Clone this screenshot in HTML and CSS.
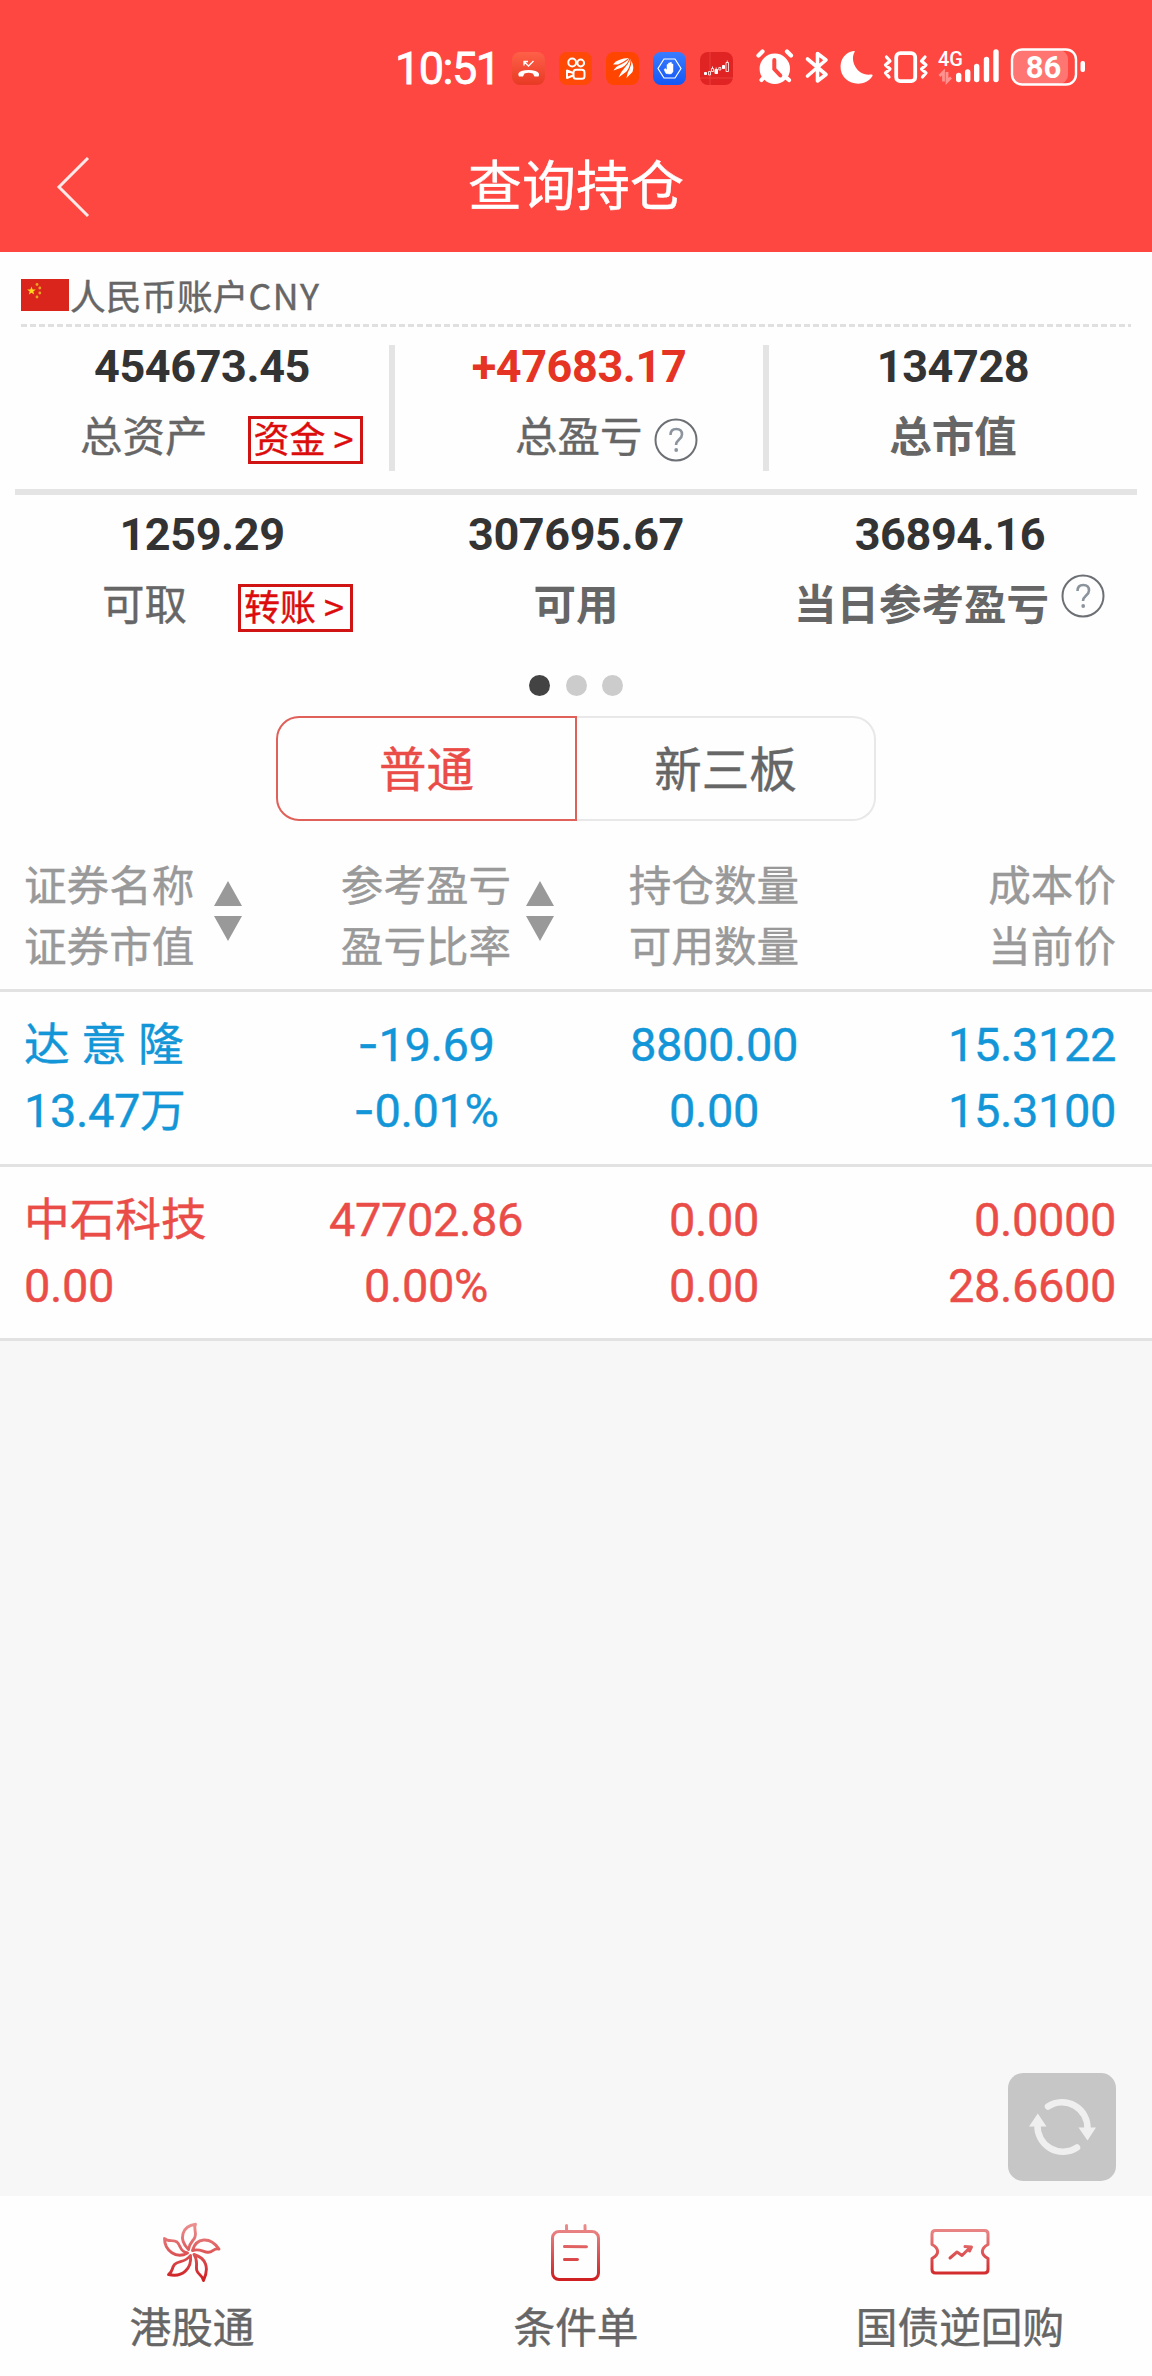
FILE: index.html
```html
<!DOCTYPE html>
<html lang="zh-CN">
<head>
<meta charset="utf-8">
<title>查询持仓</title>
<link rel="stylesheet" href="styles.css">
</head>
<body>
<div class="app">
  <header class="header">
    <div class="status">
      <span class="time">10:51</span>
      <div class="apps">
        <svg class="app-icon" viewBox="0 0 33 33"><defs><linearGradient id="gCall" x1="0" y1="0" x2="0" y2="1"><stop offset="0" stop-color="#ff6048"/><stop offset="1" stop-color="#e83a25"/></linearGradient></defs><rect width="33" height="33" rx="8" fill="url(#gCall)"/><path d="M7 24.500Q4.800 20.800 9.500 19.100Q16.500 17 23.500 19.100Q28.500 20.800 26.500 24.500L22.500 24.500 20.800 21.500Q16.500 20 12.500 21.500L11 24.500Z" fill="#fff"/><path d="M12 13.500V9.500H16M12 9.500l4.500 4.500 5-5" fill="none" stroke="#fff" stroke-width="1.300"/></svg>
        <svg class="app-icon" viewBox="0 0 33 33"><rect width="33" height="33" rx="8" fill="#ff4906"/><g fill="none" stroke="#fff" stroke-width="2"><circle cx="13.200" cy="10.500" r="3.900"/><circle cx="21.700" cy="11" r="3.400"/><rect x="14.500" y="17.800" width="11" height="9" rx="2.600"/><path d="M14 21l-6-2.500v7.500l6-2.500" stroke-linejoin="round"/></g></svg>
        <svg class="app-icon" viewBox="0 0 33 33"><rect width="33" height="33" rx="8" fill="#ff4500"/><path d="M7 12.500Q11 6.500 23 6 17 10.500 12 12.500ZM7.500 18.500Q10 14 15 12.500 20 10 23.500 6.500 21 13 16 15.500ZM12.500 25.500Q15 19.500 18.500 16 22.500 11.500 24.500 7 24.500 14.500 20.500 19.500ZM20.500 26Q21 21 23.500 17 25.500 12 25.500 9 28.500 15 26.500 20Z" fill="#fff"/></svg>
        <svg class="app-icon" viewBox="0 0 33 33"><defs><linearGradient id="gBlue" x1="0" y1="0" x2="0" y2="1"><stop offset="0" stop-color="#3a7cff"/><stop offset="1" stop-color="#1257f5"/></linearGradient></defs><rect width="33" height="33" rx="8" fill="url(#gBlue)"/><path d="M11 7h11l6 9.500-6 9.500H11L5 16.500Z" fill="none" stroke="#fff" stroke-width="1.200"/><path d="M13 21.500l-2-4 1.500-1 1.500 1.500V12.500h1.500V16v-5H17v5-5.500h1.500V16v-4H20v7.500q-1 2.500-3 2.500Z" fill="#fff" stroke="#fff" stroke-width=".5"/></svg>
        <svg class="app-icon" viewBox="0 0 33 33"><rect width="33" height="33" rx="8" fill="#e02424"/><path d="M10 0v33M0 26h33" stroke="#ee4747" stroke-width=".7"/><path d="M4.500 20.500h2v2h-2zM15 17.500h2.500v4H15zM22.500 13.500h2v3h-2z" fill="#fff" stroke="#fff"/><path d="M8.500 19.500h2v3.500h-2zM11.500 16.500h2v3h-2zM18.800 15.500h2v2.500h-2zM26 10.500h2.500v9H26zM12.500 14.500v2M27.300 8.500v2M16.200 15.500v2" fill="none" stroke="#fff" stroke-width=".8"/></svg>
      </div>
      <svg class="signals" viewBox="0 0 332 40" role="img" aria-label="系统状态">
        <g fill="#fff">
          <circle cx="18.800" cy="20.700" r="15.200"/>
          <path d="M8.500 28.500L5.500 32M29 28.500l4 3.500M2.500 7.500L6.500 3.500M31 3.500L35 7.500" stroke="#fff" stroke-width="4.200" stroke-linecap="round"/>
          <path d="M18.300 12v9l6 6.500" fill="none" stroke="#ff4741" stroke-width="4" stroke-linecap="round"/>
          <path d="M51.500 11l18.500 15.500-8.500 6.500V5.500L70 12 51.500 28" fill="none" stroke="#fff" stroke-width="3.600" stroke-linecap="round" stroke-linejoin="round"/>
          <path d="M99 3.200C93 12 101 28.500 115 26.500c2-.5 1.800.8 1.200 2C107 41.500 84 36 84.500 18 85 8.500 92 3.500 97.500 3Z"/>
          <rect x="140.200" y="5.200" width="19" height="28" rx="4" fill="none" stroke="#fff" stroke-width="3.800"/>
          <path d="M130.500 9l3.500 4-4.500 4 4.500 4-4.500 4 3.500 4M169 9l-3.500 4 4.500 4-4.500 4 4.500 4-3.500 4" fill="none" stroke="#fff" stroke-width="3.200" stroke-linecap="round" stroke-linejoin="round"/>
        </g>
        <text class="net" x="182" y="18" textLength="25" lengthAdjust="spacingAndGlyphs">4G</text>
        <path d="M187.500 33.500V24l-4 4M191 24v9.500l4-4" fill="none" stroke="#ff928e" stroke-width="2.800"/>
        <path d="M202.700 27.500v4M211.700 24v7.500M220.700 18.500v13M230.500 11.500v20M240 4v27.500" stroke="#fff" stroke-width="5.400" stroke-linecap="round"/>
        <rect x="256" y="2" width="56" height="34" rx="9" fill="#ff7571"/>
        <rect x="256" y="1.500" width="64" height="35" rx="10" fill="none" stroke="#fff" stroke-width="2.400"/>
        <rect x="324.500" y="13" width="4.500" height="11" rx="2" fill="#fff"/>
        <text class="level" x="287.500" y="30" text-anchor="middle">86</text>
      </svg>
    </div>
    <div class="titlebar">
      <svg class="back" viewBox="0 0 34 62"><path d="M32 2L3 31l29 29" fill="none" stroke="#ffe9e8" stroke-width="3"/></svg>
      <h1 class="title">查询持仓</h1>
    </div>
  </header>

  <section class="summary">
    <div class="account">
      <svg class="flag" viewBox="0 0 48 32"><rect width="48" height="32" fill="#da251c"/><path d="M10.500 7.500l1.100 3h3.200l-2.500 2 .9 3.100-2.700-1.800-2.700 1.800.9-3.100-2.500-2h3.200Z" fill="#ffd91a"/><g fill="#e9a51f"><circle cx="16" cy="5.500" r="1.400"/><circle cx="18.800" cy="9" r="1.400"/><circle cx="18.800" cy="14" r="1.400"/><circle cx="16" cy="18" r="1.400"/></g></svg>
      <span>人民币账户<span class="code">CNY</span></span>
    </div>
    <div class="dashes"></div>
    <div class="stats stats-top">
      <div class="stat"><b class="num">454673.45</b><div class="label label-assets">总资产<a class="tag">资金 &gt;</a></div></div>
      <i class="vline"></i>
      <div class="stat"><b class="num up">+47683.17</b><div class="label label-profit">总盈亏<svg class="help" viewBox="0 0 44 44"><circle cx="22" cy="22" r="20.500"/><path d="M16.500 17q0-6 5.800-6 5.700 0 5.700 5.500c0 5-6 5-6 10.500"/><circle class="pt" cx="22.200" cy="32" r="1.900"/></svg></div></div>
      <i class="vline"></i>
      <div class="stat"><b class="num">134728</b><div class="label strong">总市值</div></div>
    </div>
    <div class="hline"></div>
    <div class="stats stats-bottom">
      <div class="stat"><b class="num">1259.29</b><div class="label label-cash">可取<a class="tag">转账 &gt;</a></div></div>
      <div class="stat"><b class="num">307695.67</b><div class="label strong">可用</div></div>
      <div class="stat"><b class="num">36894.16</b><div class="label strong label-today">当日参考盈亏<svg class="help" viewBox="0 0 44 44"><circle cx="22" cy="22" r="20.500"/><path d="M16.500 17q0-6 5.800-6 5.700 0 5.700 5.500c0 5-6 5-6 10.500"/><circle class="pt" cx="22.200" cy="32" r="1.900"/></svg></div></div>
    </div>
    <div class="dots"><i class="on"></i><i></i><i></i></div>
    <div class="tabs"><div class="tab active">普通</div><div class="tab">新三板</div></div>
  </section>

  <section class="table">
    <div class="row head">
      <div class="c1">证券名称<br>证券市值<svg class="sort" viewBox="0 0 28 60"><path d="M14 0l14 25H0ZM0 35h28L14 60Z" fill="#999"/></svg></div>
      <div class="c2">参考盈亏<br>盈亏比率<svg class="sort" viewBox="0 0 28 60"><path d="M14 0l14 25H0ZM0 35h28L14 60Z" fill="#999"/></svg></div>
      <div class="c3">持仓数量<br>可用数量</div>
      <div class="c4">成本价<br>当前价</div>
    </div>
    <div class="row blue">
      <div class="c1"><span class="name">达 意 隆</span><br>13.47<span class="unit">万</span></div>
      <div class="c2"><span class="minus">-</span>19.69<br><span class="minus">-</span>0.01%</div>
      <div class="c3">8800.00<br>0.00</div>
      <div class="c4">15.3122<br>15.3100</div>
    </div>
    <div class="row red">
      <div class="c1"><span class="name">中石科技</span><br>0.00</div>
      <div class="c2">47702.86<br>0.00%</div>
      <div class="c3">0.00<br>0.00</div>
      <div class="c4">0.0000<br>28.6600</div>
    </div>
  </section>

  <main class="blank">
    <button class="refresh" aria-label="刷新"><svg viewBox="0 0 108 108"><g fill="none" stroke="#efefef" stroke-width="6.500" stroke-linecap="round"><path d="M40 33.500A25.500 25.500 0 0 1 79.500 56"/><path d="M69 74.500A25.500 25.500 0 0 1 29.500 52"/></g><path d="M70.500 54.500h17.500L79.500 67.500ZM21 53.500h17.500L29.800 40.500Z" fill="#efefef"/></svg></button>
  </main>

  <nav class="nav">
    <div class="nav-item">
      <svg viewBox="0 0 60 60"><defs><linearGradient id="gRed" gradientUnits="userSpaceOnUse" x1="0" y1="2" x2="0" y2="58"><stop offset="0" stop-color="#ec9090"/><stop offset="1" stop-color="#cf1f22"/></linearGradient></defs>
        <g fill="none" stroke="url(#gRed)" stroke-width="2.900" stroke-linejoin="round"><path d="M26.500 27.500C16 17 20 4 33.500 2.200c-2.500 5 1.500 8-.5 12.800C31.500 19 27.500 20 26.500 27.500Z"/><path d="M30.500 28.500C34 15.500 48 14 57 27c-5-1.500-6 3.500-11 3.300C41.500 30.500 38 26 30.500 28.500Z"/><path d="M32 32.500C44 36 47.500 45.500 41.500 58.500c-.5-5-5.500-5.500-6.700-10C33.500 43.500 36.500 39 32 32.500Z"/><path d="M28.500 33.500C30 46.500 20.500 56 6.500 52.500c4.500-2.500 3-6.500 6-10C16.500 38.500 23 41 28.500 33.500Z"/><path d="M25.500 31C14.500 37.500 2.500 28.500 2.500 16.500c4 4 8.500.5 12.500 3.500C19 23.500 17.500 29.500 25.500 31Z"/></g></svg>
      <span>港股通</span>
    </div>
    <div class="nav-item">
      <svg viewBox="0 0 60 60"><g fill="none" stroke="url(#gRed)" stroke-width="3" stroke-linecap="round"><rect x="6.500" y="9.500" width="46" height="48" rx="6.500"/><path d="M20.500 3.500l.1 5.500M39 3.500l.1 5.500M18.500 24.600l22 .1M18.500 37.500l13 .1"/></g></svg>
      <span>条件单</span>
    </div>
    <div class="nav-item">
      <svg viewBox="0 0 60 60"><g fill="none" stroke="url(#gRed)" stroke-width="3" stroke-linecap="round" stroke-linejoin="round"><path d="M5.500 8.500h49q3.500 0 3.500 3.500v10.500c-7.500 4-7.500 10 0 14V47.500q0 3.500-3.500 3.500h-49Q2 51 2 47.500V36.500c7.500-4 7.500-10 0-14V12q0-3.500 3.500-3.500Z"/><path d="M20 36l7-6 5 3.500 8-8M35 24.500l6.500.5-2 4"/></g></svg>
      <span>国债逆回购</span>
    </div>
  </nav>
</div>
</body>
</html>
```
FILE: styles.css
```css
* { box-sizing: border-box; }
body { margin: 0; background: #fefefe; font-family: "Noto Sans CJK SC", sans-serif; color: #666; -webkit-text-stroke: .4px currentColor; }
.app { width: 1152px; height: 2376px; display: flex; flex-direction: column; }

.header { height: 252px; background: #ff4741; color: #fff; flex: none; }
.status { display: flex; height: 120px; padding: 48px 0 0 395px; align-items: flex-start; }
.time { width: 117px; font: 400 45px/42px Roboto, sans-serif; letter-spacing: -1.500px; -webkit-text-stroke: .8px currentColor; }
.apps { display: flex; gap: 14px; padding-top: 4px; width: 244px; }
.app-icon { width: 33px; height: 33px; flex: none; }
.signals { width: 332px; height: 40px; overflow: visible; -webkit-text-stroke: 0; }
.net { font: 500 21px Roboto, sans-serif; fill: #fff; }
.level { font: 700 31px Roboto, sans-serif; fill: #fff; }
.titlebar { display: grid; grid-template-columns: 120px 1fr 120px; height: 132px; align-items: start; }
.back { width: 34px; height: 62px; margin: 36px 0 0 56px; }
.title { margin: 0; padding-top: 23px; text-align: center; font-size: 54px; line-height: 80px; font-weight: 400; }

.summary { background: #fefefe; flex: none; }
.account { display: flex; height: 72px; padding: 27px 0 0 21px; align-items: flex-start; font-size: 35.700px; line-height: 31px; }
.code { letter-spacing: 1.500px; }
.flag { width: 48px; height: 32px; margin-right: 1px; }
.dashes { height: 3px; margin: 0 21px; background: repeating-linear-gradient(90deg, #e0e0e0 0 6px, transparent 6px 9px); }
.stats { display: flex; margin: 0 15px; padding: 18px 0; }
.stats-top { display: grid; grid-template-columns: 374px 6px 368px 6px 368px; }
.stats-bottom { height: 144px; padding-bottom: 0; }
.stat { flex: 1 1 0; min-width: 0; text-align: center; }
.num { display: block; font: 700 45px/42px Roboto, sans-serif; letter-spacing: -.400px; position: relative; top: 1px; color: #333; -webkit-text-stroke: 0; }
.num.up { color: #e53324; }
.vline { width: 6px; height: 126px; background: #e4e4e4; }
.hline { height: 6px; margin: 0 15px; background: #e4e4e4; }
.label { display: flex; justify-content: center; margin-top: 23px; font-size: 42.500px; line-height: 48px; white-space: nowrap; }
.strong { font-weight: 700; -webkit-text-stroke: 0; }
.label-assets { justify-content: flex-start; padding-left: 65px; }
.label-assets .tag { margin-left: 40px; }
.label-cash { justify-content: flex-start; padding-left: 87px; }
.label-cash .tag { margin-left: 51px; }
.label-profit { justify-content: flex-start; padding-left: 120px; }
.label-today { justify-content: flex-start; padding-left: 31px; }
.tag { width: 115px; height: 48px; margin-top: 6px; padding-right: 3px; border: 3px solid #d01414; color: #dc0c0c; font-size: 36px; line-height: 36px; text-align: center; }
.help { width: 44px; height: 44px; margin: 8px 0 0 11px; fill: none; stroke: #8b949d; stroke-width: 2.600; }
.help circle { stroke: #6c7075; stroke-width: 2; }
.help .pt { fill: #8b949d; stroke: none; }
.label-today .help { margin: -4px 0 0 12px; }
.dots { display: flex; justify-content: center; gap: 15.500px; padding-top: 36px; }
.dots i { width: 21px; height: 21px; border-radius: 50%; background: #ccc; }
.dots .on { background: #434343; }
.tabs { display: flex; width: 600px; height: 105px; margin: 20px auto 0; }
.tab { flex: 1; border: 2px solid #e8e8e8; border-left: 0; border-radius: 0 23px 23px 0; text-align: center; font-size: 47.500px; line-height: 97px; }
.tab.active { border: 2px solid #e0605a; border-radius: 23px 0 0 23px; color: #ea4d48; }

.table { background: #fefefe; flex: none; }
.row { display: grid; grid-template-columns: 284px 284px 292px 1fr; height: 174.500px; padding: 20px 36px 0 24px; border-bottom: 3px solid #e2e2e2; font: 47px/66px Roboto, "Noto Sans CJK SC", sans-serif; letter-spacing: -.400px; white-space: nowrap; }
.row > div { position: relative; }
.row.head { height: 171px; padding-top: 31px; font: 42.600px/61px "Noto Sans CJK SC", sans-serif; letter-spacing: 0; color: #999; }
.name, .unit { font-size: 45.700px; line-height: 60px; letter-spacing: 0; }
.row .c2, .row .c3 { text-align: center; left: -24px; }
.c4 { text-align: right; }
.sort { position: absolute; width: 28px; height: 60px; top: 29px; left: 190px; }
.c2 .sort { left: 242px; }
.minus { font-family: Inter, sans-serif; line-height: 60px; }
.blue { color: #1296d8; }
.red { color: #ea4d48; }

.blank { flex: 1; background: #f7f7f7; display: flex; justify-content: flex-end; align-items: flex-end; padding: 0 36px 15px 0; }
.refresh { width: 108px; height: 108px; padding: 0; border: 0; border-radius: 15px; background: #c6c6c6; }
.refresh svg { display: block; }

.nav { height: 180px; flex: none; display: grid; grid-template-columns: repeat(3, 1fr); background: #fefefe; }
.nav-item { display: flex; flex-direction: column; align-items: center; padding-top: 26px; font-size: 41.700px; }
.nav-item svg { width: 60px; height: 60px; }
.nav-item span { line-height: 50px; margin-top: 18px; }
```
